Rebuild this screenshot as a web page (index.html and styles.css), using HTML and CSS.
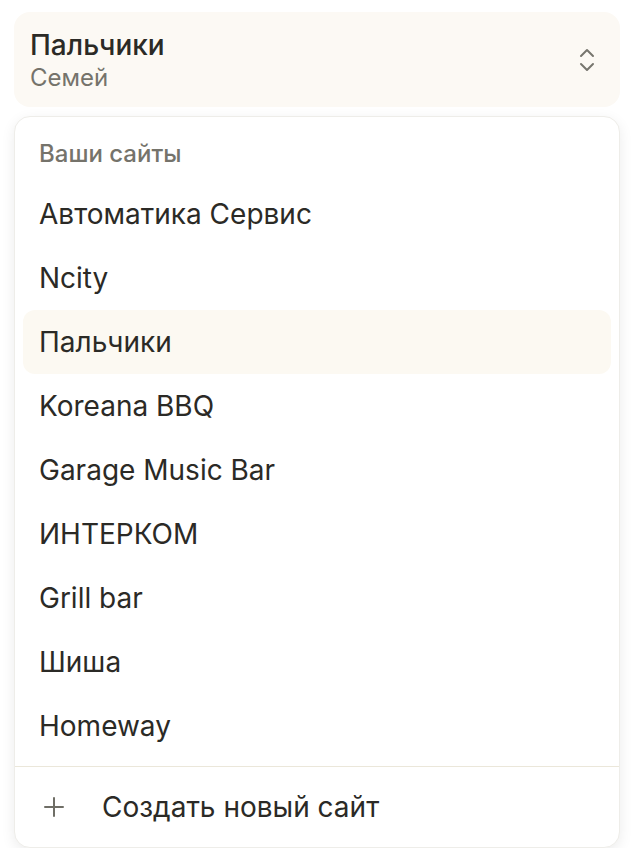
FILE: index.html
```html
<!DOCTYPE html>
<html lang="ru">
<head>
    <meta charset="UTF-8">
    <meta name="viewport" content="width=device-width, initial-scale=1.0">
    <title>Выбор сайта</title>
    <link rel="stylesheet" href="styles.css">
</head>
<body>
    <div class="switcher">
        <button class="trigger">
            <span class="trigger-text">
                <span class="trigger-title">Пальчики</span>
                <span class="trigger-sub">Семей</span>
            </span>
            <svg class="chevrons" width="22" height="28" viewBox="0 0 22 28" fill="none" stroke="#77766e" stroke-width="2" stroke-linecap="round" stroke-linejoin="round">
                <path d="M5 10 L11 4 L17 10"/>
                <path d="M5 18 L11 24 L17 18"/>
            </svg>
        </button>

        <div class="menu">
            <div class="menu-list">
                <div class="menu-label">Ваши сайты</div>
                <div class="menu-item">Автоматика Сервис</div>
                <div class="menu-item">Ncity</div>
                <div class="menu-item active">Пальчики</div>
                <div class="menu-item">Koreana BBQ</div>
                <div class="menu-item">Garage Music Bar</div>
                <div class="menu-item">ИНТЕРКОМ</div>
                <div class="menu-item">Grill bar</div>
                <div class="menu-item">Шиша</div>
                <div class="menu-item">Homeway</div>
            </div>
            <div class="menu-footer">
                <div class="menu-item create">
                    <svg width="22" height="22" viewBox="0 0 22 22" fill="none" stroke="#6f6e66" stroke-width="2" stroke-linecap="round">
                        <path d="M11 2 V20 M2 11 H20"/>
                    </svg>
                    <span>Создать новый сайт</span>
                </div>
            </div>
        </div>
    </div>
</body>
</html>
```

FILE: styles.css
```css
body { margin: 0; background: #fff; font-family: Inter, "Noto Sans", sans-serif; color: #2b2a26; }
.switcher { padding: 12px 16px 0 14px; }

.trigger { width: 100%; height: 95px; display: flex; align-items: center; justify-content: space-between; padding: 0 22px 0 16px; border: none; border-radius: 16px; background: #fcf9f4; font: inherit; color: inherit; text-align: left; box-sizing: border-box; }
.trigger-text { display: flex; flex-direction: column; gap: 1px; margin-top: 3px; }
.trigger-title { font-size: 28px; font-weight: 500; line-height: 32px; }
.trigger-sub { font-size: 24px; color: #75736b; line-height: 32px; }

.menu { margin-top: 9px; border: 1px solid #eeede9; border-radius: 16px; background: #fff; box-shadow: 0 4px 14px rgba(0, 0, 0, 0.08); overflow: hidden; }
.menu-list { padding: 7px 8px 8px; border-bottom: 1px solid #ebe7da; }
.menu-label { height: 58px; display: flex; align-items: center; padding: 0 16px; font-size: 24px; font-weight: 500; color: #75736b; }
.menu-item { height: 64px; display: flex; align-items: center; padding: 0 16px; font-size: 28px; border-radius: 12px; }
.menu-item.active { background: #fcf9f2; }

.menu-footer { padding: 8px; }
.menu-item.create { gap: 37px; padding-left: 20px; }
```
